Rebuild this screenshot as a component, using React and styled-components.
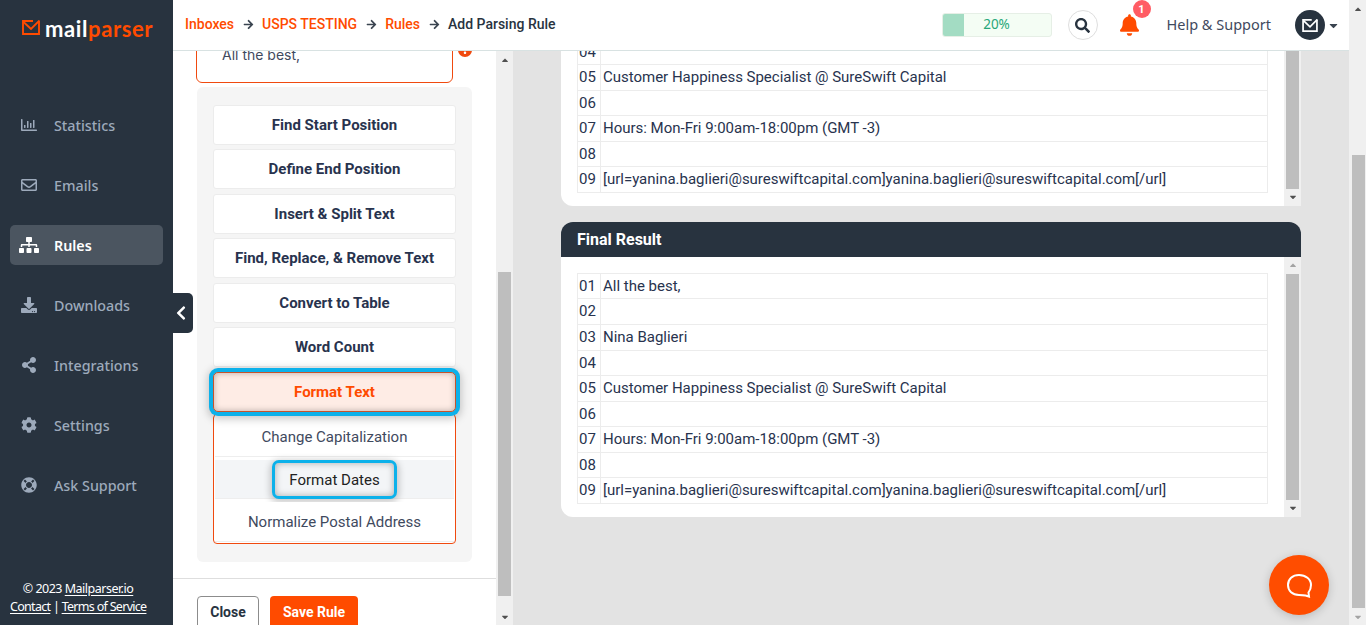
import React from "react";
import styled, { createGlobalStyle } from "styled-components";
import { FaRegChartBar, FaRegEnvelope, FaSitemap, FaDownload, FaShareAlt, FaCog, FaLifeRing, FaChevronLeft, FaArrowRight, FaSearch, FaBell, FaCaretDown, FaCaretUp, FaExclamation } from "react-icons/fa";

const Global = createGlobalStyle`
  html, body { margin: 0; padding: 0; height: 100%; overflow: hidden; background: #e3e3e3; }
  * { box-sizing: border-box; }
  #root { height: 100%; }
`;

const Shell = styled.div`
  display: grid;
  grid-template-columns: 173px 1fr 17px;
  height: 100vh;
  font-family: Roboto, "Liberation Sans", sans-serif;
  overflow: hidden;
  position: relative;
`;

const Sidebar = styled.aside`
  background: #28333f;
  display: flex;
  flex-direction: column;
  height: 100%;
`;
const Logo = styled.div`
  height: 95px;
  padding: 14px 0 0 22px;
  display: flex;
  align-items: flex-start;
  gap: 5px;
`;
const Wordmark = styled.span`
  font-family: Lato, sans-serif;
  font-size: 22px;
  line-height: 30px;
  font-weight: 700;
  letter-spacing: 0.6px;
  color: #fff;
  & b { color: #ff4b00; font-weight: 700; }
`;
const Nav = styled.nav`
  display: flex;
  flex-direction: column;
  flex: 1;
`;
const NavItem = styled.a`
  height: 60px;
  display: flex;
  align-items: center;
  padding: 0 10px;
  font-family: "Noto Sans", sans-serif;
  font-size: 14.3px;
  font-weight: 500;
  color: ${p => (p.$active ? "#fff" : "#9daabb")};
`;
const NavInner = styled.span`
  flex: 1;
  height: 40px;
  display: flex;
  align-items: center;
  padding-left: 11px;
  gap: 17px;
  border-radius: 5px;
  background: ${p => (p.$active ? "#4b5560" : "transparent")};
  font-weight: ${p => (p.$active ? 600 : 500)};
  & svg {
    width: ${p => (p.$active ? 20 : 16)}px;
    height: ${p => (p.$active ? 18 : 16)}px;
    margin: 0 ${p => (p.$active ? -2 : 0)}px;
    flex: none;
  }
`;
const Legal = styled.footer`
  padding: 0 0 9px 10px;
  font-family: "Noto Sans", sans-serif;
  font-size: 12.5px;
  line-height: 18px;
  color: #fff;
  text-align: center;
  width: 146px;
  & u { text-underline-offset: 2px; }
`;
const LegalLine = styled.div`
  white-space: nowrap;
  letter-spacing: ${p => p.$tight}px;
`;

const Workspace = styled.div`
  display: flex;
  flex-direction: column;
  min-width: 0;
  height: 100vh;
  position: relative;
`;
const TopBar = styled.header`
  height: 51px;
  flex: none;
  background: #fff;
  border-bottom: 1px solid #d8e2e2;
  display: flex;
  align-items: center;
  padding: 0 0 0 12px;
  position: relative;
  z-index: 2;
`;
const Crumbs = styled.div`
  display: flex;
  align-items: center;
  gap: 8px;
  font-size: 14px;
  font-weight: 500;
  color: #28333f;
  flex: 1;
  position: relative;
  top: -1px;
  & svg { width: 11px; height: 11px; color: #3a4450; margin: 0 0.5px; }
`;
const Crumb = styled.span`
  color: #ff4b00;
`;
const Progress = styled.div`
  width: 110px;
  height: 24px;
  border: 1px solid #e6efe6;
  border-radius: 3px;
  background: #f4fdf4;
  position: relative;
  display: flex;
  align-items: center;
  justify-content: center;
  font-family: "Noto Sans", sans-serif;
  font-size: 13.5px;
  color: #27a77a;
  margin-right: 16px;
`;
const ProgressFill = styled.span`
  position: absolute;
  left: 0;
  top: 0;
  bottom: 0;
  background: #a3dcc3;
  border-radius: 2px 0 0 2px;
`;
const ProgressLabel = styled.span`
  position: relative;
  top: -1px;
`;
const SearchBtn = styled.button`
  width: 30px;
  height: 30px;
  border-radius: 50%;
  background: #fff;
  border: 1px solid #dedede;
  padding: 0;
  display: flex;
  align-items: center;
  justify-content: center;
  color: #28333f;
  margin-right: 22px;
  & svg { width: 15px; height: 15px; }
`;
const Bell = styled.div`
  position: relative;
  width: 18px;
  height: 22px;
  color: #ff4b00;
  margin-right: 29px;
  & svg { width: 19px; height: 22px; display: block; }
`;
const Badge = styled.span`
  position: absolute;
  left: 13px;
  top: -14px;
  width: 18px;
  height: 18px;
  border-radius: 50%;
  background: #ff5c64;
  color: #fff;
  font-size: 11px;
  font-weight: 700;
  display: flex;
  align-items: center;
  justify-content: center;
`;
const Help = styled.span`
  font-family: "Noto Sans", sans-serif;
  font-size: 14.5px;
  color: #3f4a5e;
  margin-right: 24px;
  white-space: nowrap;
  position: relative;
  top: -1px;
`;
const Avatar = styled.div`
  width: 30px;
  height: 30px;
  border-radius: 50%;
  background: #28333f;
  display: flex;
  align-items: center;
  justify-content: center;
`;
const Caret = styled.span`
  color: #3a4450;
  margin: 0 9px 0 2px;
  display: flex;
  & svg { width: 13px; height: 13px; }
`;
const Panes = styled.div`
  flex: 1;
  min-height: 0;
  display: flex;
  overflow: hidden;
`;
const RulePane = styled.section`
  width: 323px;
  flex: none;
  background: #fff;
  overflow: hidden;
`;
const RuleScroll = styled.div`
  margin-top: -68px;
`;
const TextBox = styled.div`
  position: relative;
  margin: 0 43px 4px 23px;
  height: 100px;
  border: 1px solid #f04a0f;
  border-radius: 6px;
  padding: 61px 25px 0;
  font-family: Inter, sans-serif;
  font-size: 14px;
  line-height: 20px;
  color: #3f4a5e;
`;
const ErrorDot = styled.span`
  position: absolute;
  left: 261px;
  top: 59px;
  width: 14px;
  height: 14px;
  border-radius: 50%;
  background: #f04a0f;
  color: #fff;
  display: flex;
  align-items: center;
  justify-content: center;
  & svg { width: 8px; height: 8px; }
`;
const ActionPanel = styled.div`
  margin: 0 24px 16px 24px;
  width: 275px;
  height: 475px;
  background: #f5f5f5;
  border-radius: 6px;
  padding: 18px 16px;
  display: flex;
  flex-direction: column;
  gap: 4.4px;
`;
const ActionButton = styled.button`
  flex: none;
  height: 40px;
  width: 243px;
  background: #fff;
  border: 1px solid #ececec;
  border-radius: 3px;
  font: 700 15px Roboto, sans-serif;
  color: #28334e;
  padding: 0;
`;
const ActiveButton = styled(ActionButton)`
  background: #feece5;
  color: #ff4b00;
  border: 1px solid #c9532a;
  border-radius: 5px;
  position: relative;
  z-index: 1;
  margin-top: 0.6px;
  box-shadow: inset 0 0 6px rgba(0,0,0,.28), 0 0 0 4px #0cb1ea, 0 2px 8px 5px rgba(0,0,0,.22);
`;
const Submenu = styled.div`
  margin-top: -2px;
  height: 131px;
  width: 243px;
  border: 1px solid #f04a0f;
  border-radius: 4px;
  display: flex;
  flex-direction: column;
  gap: 3px;
  padding: 0 1px;
  background: #fff;
`;
const SubItem = styled.div`
  height: ${p => p.$h}px;
  flex: none;
  display: flex;
  align-items: center;
  justify-content: center;
  font-size: 15px;
  color: #3f4a5e;
  padding-top: ${p => p.$pad || 0}px;
  background: ${p => (p.$hover ? "#f3f5f7" : "#fff")};
  border-bottom: 1px solid #eee;
`;
const Spotlight = styled.span`
  flex: none;
  width: 125px;
  height: 39px;
  border: 3.5px solid #0cb1ea;
  border-radius: 7px;
  padding-top: 1px;
  display: flex;
  align-items: center;
  justify-content: center;
  color: #222;
  background: #f3f5f7;
  box-shadow: inset 0 0 7px rgba(0,0,0,.3), 0 2px 7px 2px rgba(0,0,0,.2);
`;
const RuleFooter = styled.div`
  border-top: 1px solid #dedede;
  padding: 17px 24px;
  display: flex;
  gap: 11px;
`;
const Close = styled.button`
  width: 62px;
  height: 40px;
  padding: 0 0 8px;
  background: #fff;
  border: 1px solid #8c8c8c;
  border-radius: 4px;
  font: 700 14px Roboto, sans-serif;
  color: #28333f;
`;
const Save = styled.button`
  width: 88px;
  height: 40px;
  padding: 0 0 8px;
  background: #ff4b00;
  border: none;
  border-radius: 4px;
  font: 700 14px Roboto, sans-serif;
  color: #fff;
`;
const Scrollbar = styled.div`
  width: 17px;
  flex: none;
  background: #f0f0f0;
  display: flex;
  flex-direction: column;
  align-items: center;
  height: ${p => (p.$stretch ? "auto" : "100%")};
`;
const Arrow = styled.span`
  height: 17px;
  flex: none;
  display: flex;
  align-items: center;
  justify-content: center;
  color: ${p => (p.$dim ? "#a3a3a3" : "#505050")};
  & svg { width: 10px; height: 10px; }
`;
const Thumb = styled.span`
  width: 13px;
  flex: ${p => (p.$grow ? 1 : "none")};
  background: #bebebe;
  margin-top: ${p => p.$top || 0}px;
  height: ${p => (p.$h ? `${p.$h}px` : "auto")};
  margin-left: ${p => p.$left || 0}px;
`;
const Spacer = styled.span`
  flex: 1;
`;
const ResultPane = styled.main`
  flex: 1;
  min-width: 0;
  padding: 0 48px;
  background: #e3e3e3;
  overflow: hidden;
`;
const Card = styled.div`
  display: flex;
  background: #fff;
  border-radius: 0 0 0 12px;
  margin-top: ${p => p.$top || 0}px;
  margin-bottom: 16px;
`;
const CardHead = styled.h3`
  margin: 0;
  height: 35px;
  background: #28333f;
  border-radius: 12px 12px 0 0;
  color: #fff;
  font-size: 16px;
  line-height: 35px;
  font-weight: 700;
  padding-left: 16px;
`;
const TableWrap = styled.div`
  flex: 1;
  min-width: 0;
  padding: 16px 16px 13px;
`;
const Table = styled.div`
  border: 1px solid #ececec;
  border-bottom: none;
`;
const Row = styled.div`
  display: flex;
  height: 25.55px;
  border-bottom: 1px solid #ececec;
  font-size: 15px;
  line-height: 24px;
  letter-spacing: -0.012px;
  color: #28334e;
`;
const Num = styled.span`
  width: 23px;
  flex: none;
  border-right: 1px solid #ececec;
  padding-left: 1px;
  text-align: left;
`;
const Cell = styled.span`
  padding-left: 2px;
  white-space: nowrap;
`;
const PageBar = styled.div`
  width: 17px;
  background: #f0f0f0;
  display: flex;
  flex-direction: column;
  align-items: center;
  height: 100vh;
`;
const Collapse = styled.button`
  position: absolute;
  left: 173px;
  top: 293px;
  width: 20px;
  height: 40px;
  background: #28333f;
  border: none;
  border-radius: 0 5px 5px 0;
  color: #fff;
  padding: 0 5px 0 0;
  display: flex;
  align-items: center;
  justify-content: center;
  & svg { width: 14px; height: 16px; }
`;
const Chat = styled.div`
  position: absolute;
  left: 1269px;
  top: 555px;
  width: 60px;
  height: 60px;
  border-radius: 50%;
  background: #ff4d00;
  box-shadow: 0 2px 10px rgba(0,0,0,.18);
  display: flex;
  align-items: center;
  justify-content: center;
`;
const MarkSvg = styled.svg`
  margin-top: 6px;
  flex: none;
`;

const LogoMark = () => (
  <MarkSvg width="18" height="15" viewBox="0 0 18 15" fill="none" stroke="#ff4b00" strokeWidth="1.9">
    <path d="M11 1H1v13h16V1" />
    <path d="M1.5 2 9 9l8.500-8.500" />
  </MarkSvg>
);

const AvatarMark = () => (
  <svg width="16" height="13" viewBox="0 0 18 15" fill="none" stroke="#fff" strokeWidth="2">
    <path d="M11 1H1v13h16V1" />
    <path d="M1.5 2 9 9l8.500-8.500" />
  </svg>
);

const lines = ["All the best,", "", "Nina Baglieri", "", "Customer Happiness Specialist @ SureSwift Capital", "", "Hours: Mon-Fri 9:00am-18:00pm (GMT -3)", "", "[url=yanina.baglieri@sureswiftcapital.com]yanina.baglieri@sureswiftcapital.com[/url]"];

const ResultTable = () => (
  <TableWrap>
    <Table>
      {lines.map((l, i) => (
        <Row key={i}>
          <Num>0{i + 1}</Num>
          <Cell>{l}</Cell>
        </Row>
      ))}
    </Table>
  </TableWrap>
);

const nav = [
  ["Statistics", FaRegChartBar],
  ["Emails", FaRegEnvelope],
  ["Rules", FaSitemap, true],
  ["Downloads", FaDownload],
  ["Integrations", FaShareAlt],
  ["Settings", FaCog],
  ["Ask Support", FaLifeRing],
];

const actions = ["Find Start Position", "Define End Position", "Insert & Split Text", "Find, Replace, & Remove Text", "Convert to Table", "Word Count"];

export default function App() {
  return (
    <>
      <Global />
      <Shell>
        <Sidebar>
          <Logo>
            <LogoMark />
            <Wordmark>mail<b>parser</b></Wordmark>
          </Logo>
          <Nav>
            {nav.map(([label, Icon, active]) => (
              <NavItem key={label} $active={active}>
                <NavInner $active={active}>
                  <Icon />
                  {label}
                </NavInner>
              </NavItem>
            ))}
          </Nav>
          <Legal>
            <LegalLine $tight={-0.5}>© 2023 <u>Mailparser.io</u></LegalLine>
            <LegalLine $tight={-0.7}><u>Contact</u> | <u>Terms of Service</u></LegalLine>
          </Legal>
        </Sidebar>
        <Workspace>
          <TopBar>
            <Crumbs>
              <Crumb>Inboxes</Crumb>
              <FaArrowRight />
              <Crumb>USPS TESTING</Crumb>
              <FaArrowRight />
              <Crumb>Rules</Crumb>
              <FaArrowRight />
              <span>Add Parsing Rule</span>
            </Crumbs>
            <Progress>
              <ProgressFill style={{ width: "20%" }} />
              <ProgressLabel>20%</ProgressLabel>
            </Progress>
            <SearchBtn><FaSearch /></SearchBtn>
            <Bell>
              <FaBell />
              <Badge>1</Badge>
            </Bell>
            <Help>Help &amp; Support</Help>
            <Avatar><AvatarMark /></Avatar>
            <Caret><FaCaretDown /></Caret>
          </TopBar>
          <Panes>
            <RulePane>
              <RuleScroll>
                <TextBox>
                  All the best,
                  <ErrorDot><FaExclamation /></ErrorDot>
                </TextBox>
                <ActionPanel>
                  {actions.map(a => <ActionButton key={a}>{a}</ActionButton>)}
                  <ActiveButton>Format Text</ActiveButton>
                  <Submenu>
                    <SubItem $h={42} $pad={2}>Change Capitalization</SubItem>
                    <SubItem $h={39} $hover><Spotlight>Format Dates</Spotlight></SubItem>
                    <SubItem $h={40}>Normalize Postal Address</SubItem>
                  </Submenu>
                </ActionPanel>
                <RuleFooter>
                  <Close>Close</Close>
                  <Save>Save Rule</Save>
                </RuleFooter>
              </RuleScroll>
            </RulePane>
            <Scrollbar>
              <Arrow><FaCaretUp /></Arrow>
              <Thumb $top={204} $h={324} />
              <Spacer />
              <Arrow><FaCaretDown /></Arrow>
            </Scrollbar>
            <ResultPane>
              <Card $top={-105}>
                <ResultTable />
                <Scrollbar $stretch>
                  <Thumb $grow />
                  <Arrow><FaCaretDown /></Arrow>
                </Scrollbar>
              </Card>
              <CardHead>Final Result</CardHead>
              <Card>
                <ResultTable />
                <Scrollbar $stretch>
                  <Arrow $dim><FaCaretUp /></Arrow>
                  <Thumb $grow />
                  <Arrow><FaCaretDown /></Arrow>
                </Scrollbar>
              </Card>
            </ResultPane>
          </Panes>
        </Workspace>
        <PageBar>
          <Arrow><FaCaretUp /></Arrow>
          <Thumb $top={138} $h={453} $left={1} />
          <Spacer />
          <Arrow $dim><FaCaretDown /></Arrow>
        </PageBar>
        <Collapse><FaChevronLeft /></Collapse>
        <Chat>
          <svg width="26" height="25" viewBox="0 0 26 25" fill="none" stroke="#fff" strokeWidth="2">
            <path d="M13 2C6.500 2 2 6 2 12s4.500 10 11 10c2.500 0 4.500 0 6.500.5l3.500 1-.5-4c1.500-2 2.500-4 2.500-7.500C25 6 19.500 2 13 2Z" />
          </svg>
        </Chat>
      </Shell>
    </>
  );
}
